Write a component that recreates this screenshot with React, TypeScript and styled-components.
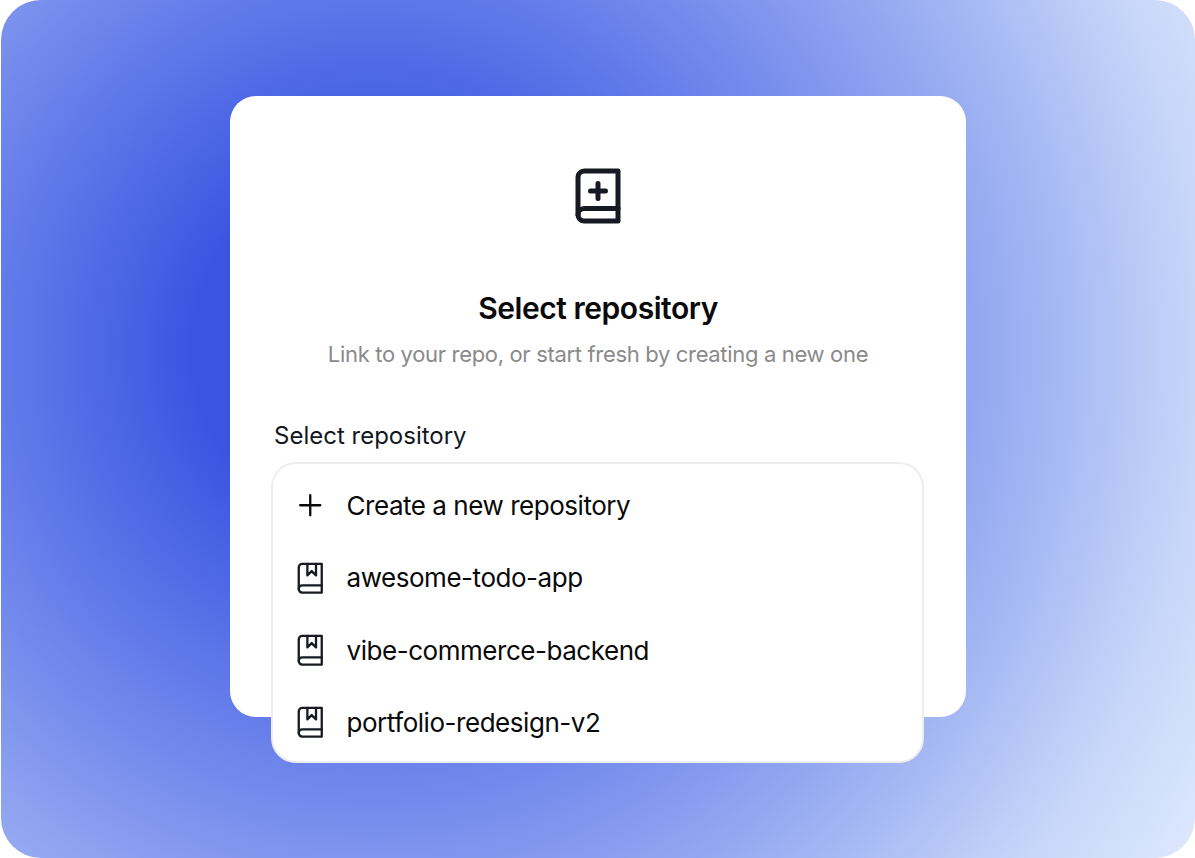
import { FC, type ReactElement, type ReactNode } from "react"
import styled, { createGlobalStyle } from "styled-components"

interface IconProps {
  size: number
}

interface StrokeIconProps extends IconProps {
  strokeWidth: number
  color: string
  children: ReactNode
}

const repositories = ["awesome-todo-app", "vibe-commerce-backend", "portfolio-redesign-v2"]

const GlobalStyle = createGlobalStyle`
  * {
    box-sizing: border-box;
  }

  body {
    margin: 0;
    background: #fff;
    font-family: Inter, "Liberation Sans", sans-serif;
  }
`

const Backdrop = styled.main`
  display: flex;
  align-items: flex-start;
  justify-content: center;

  height: 858px;
  margin-left: 1px;
  padding-top: 96px;
  overflow: hidden;

  border-radius: 40px;
  background: radial-gradient(
    circle at 372px 350px,
    #3a56e1 180px,
    #657dea 385px,
    #8096ee 515px,
    #95a9f1 612px,
    #c7d7f9 830px,
    #e0eafe 975px
  );
`

const Card = styled.section`
  display: flex;
  align-items: center;
  flex-direction: column;

  width: 736px;
  height: 621px;
  padding: 69.5px 42px 0 41px;

  border-radius: 26px;
  background: #fff;
`

const Title = styled.h1`
  margin: 62.5px 0 11px 1px;

  color: #0a0a0a;
  font-size: 30px;
  font-weight: 600;
  line-height: 40px;
  letter-spacing: -0.45px;
`

const Description = styled.p`
  margin: 0 0 0 1px;

  color: #8a8a8a;
  font-size: 22px;
  line-height: 31px;
  letter-spacing: -0.33px;
`

const Label = styled.h2`
  align-self: flex-start;
  margin: 51px 0 11px 3px;

  color: #14171f;
  font-size: 24px;
  font-weight: 400;
  line-height: 30px;
`

const Dropdown = styled.ul`
  flex-shrink: 0;
  width: 653px;
  height: 301px;
  margin: 0;
  padding: 5.5px 0 0;

  list-style: none;

  border: 2px solid #eeeeef;
  border-radius: 25px;
  background: #fff;
`

const Option = styled.li`
  display: flex;
  align-items: center;
  gap: 19px;

  height: 72.3px;
  padding: 0 20px;

  color: #0a0a0a;
  font-size: 26px;
  letter-spacing: -0.46px;
`

const Svg = styled.svg`
  display: block;
  flex-shrink: 0;
`

const StrokeIcon: FC<StrokeIconProps> = ({ size, strokeWidth, color, children }): ReactElement => (
  <Svg
    width={size}
    height={size}
    viewBox="0 0 24 24"
    fill="none"
    stroke={color}
    strokeWidth={strokeWidth}
    strokeLinecap="round"
    strokeLinejoin="round"
  >
    {children}
  </Svg>
)

const BookCover = (): ReactElement => (
  <>
    <path d="M4 19.5A2.5 2.5 0 0 1 6.5 17H20" />
    <path d="M6.5 2H20v20H6.5A2.5 2.5 0 0 1 4 19.5v-15A2.5 2.5 0 0 1 6.5 2z" />
  </>
)

const BookPlusIcon: FC<IconProps> = ({ size }): ReactElement => (
  <StrokeIcon size={size} strokeWidth={2} color="#171a23">
    <BookCover />
    <path d="M9 10h6M12 7v6" />
  </StrokeIcon>
)

const BookmarkIcon: FC<IconProps> = ({ size }): ReactElement => (
  <StrokeIcon size={size} strokeWidth={1.6} color="#171a23">
    <BookCover />
    <path d="M10 2v8l3-3 3 3V2" />
  </StrokeIcon>
)

const PlusIcon: FC<IconProps> = ({ size }): ReactElement => (
  <StrokeIcon size={size} strokeWidth={1.6} color="#0a0a0a">
    <path d="M5 12h14M12 5v14" />
  </StrokeIcon>
)

const App: FC = (): ReactElement => {
  return (
    <>
      <GlobalStyle />
      <Backdrop>
        <Card>
          <BookPlusIcon size={60} />
          <Title>Select repository</Title>
          <Description>Link to your repo, or start fresh by creating a new one</Description>
          <Label>Select repository</Label>
          <Dropdown>
            <Option>
              <PlusIcon size={34.5} />
              Create a new repository
            </Option>
            {repositories.map((name) => (
              <Option key={name}>
                <BookmarkIcon size={34.5} />
                {name}
              </Option>
            ))}
          </Dropdown>
        </Card>
      </Backdrop>
    </>
  )
}

export default App
